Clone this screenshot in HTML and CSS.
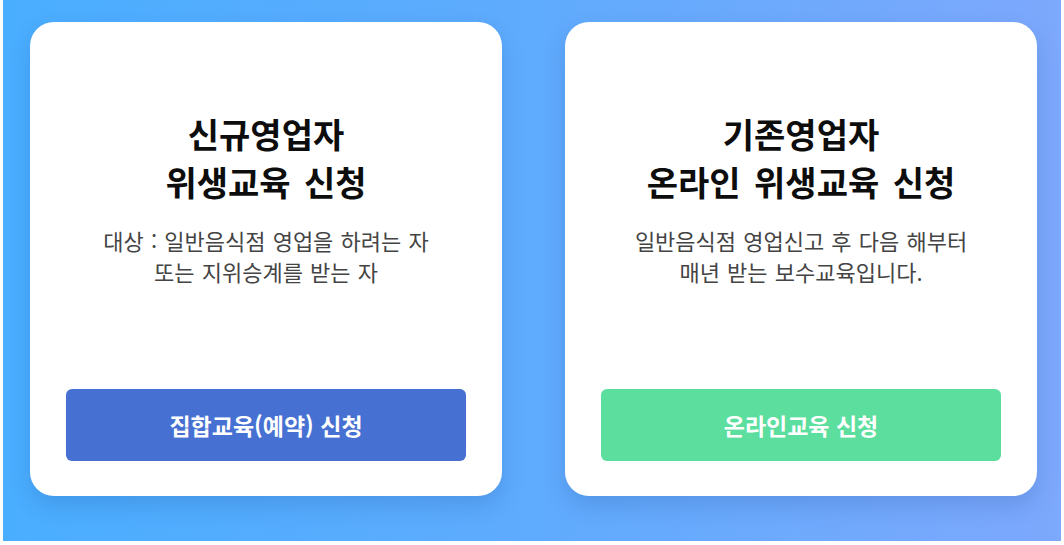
FILE: index.html
```html
<!DOCTYPE html>
<html lang="ko">
<head>
<meta charset="utf-8">
<title>위생교육 신청</title>
<link rel="stylesheet" href="styles.css">
</head>
<body>
<main class="stage">
  <section class="card">
    <h2 class="card-title">신규영업자<br>위생교육 신청</h2>
    <p class="card-desc">대상 : 일반음식점 영업을 하려는 자<br>또는 지위승계를 받는 자</p>
    <a class="card-btn btn-blue" href="#">집합교육(예약) 신청</a>
  </section>
  <section class="card">
    <h2 class="card-title">기존영업자<br>온라인 위생교육 신청</h2>
    <p class="card-desc">일반음식점 영업신고 후 다음 해부터<br>매년 받는 보수교육입니다.</p>
    <a class="card-btn btn-green" href="#">온라인교육 신청</a>
  </section>
</main>
</body>
</html>
```

FILE: styles.css
```css
html, body {
  margin: 0;
  padding: 0;
  background: #ffffff;
}
body {
  font-family: "Noto Sans CJK KR", "Noto Sans", sans-serif;
}
.stage {
  margin: 0 3px;
  height: 541px;
  box-sizing: border-box;
  padding: 22px 0 0 27px;
  display: flex;
  gap: 63px;
  align-items: flex-start;
  background: linear-gradient(90deg, #4aaeff 0%, #5fabfd 50%, #7da8fc 100%);
}
.card {
  width: 472px;
  height: 474px;
  box-sizing: border-box;
  padding: 88px 36px 35px;
  background: #ffffff;
  border-radius: 24px;
  box-shadow: 0 10px 22px rgba(20, 60, 140, 0.18);
  display: flex;
  flex-direction: column;
  align-items: stretch;
  text-align: center;
}
.card-title {
  margin: 0;
  font-size: 34px;
  line-height: 48px;
  font-weight: 700;
  color: #0d0d0d;
  word-spacing: 4px;
}
.card-desc {
  margin: 19px 0 0;
  font-size: 22px;
  line-height: 31px;
  color: #444444;
  word-spacing: 1px;
}
.card-btn {
  margin-top: auto;
  height: 72px;
  border-radius: 6px;
  display: flex;
  align-items: center;
  justify-content: center;
  font-size: 23px;
  font-weight: 700;
  color: #ffffff;
  text-decoration: none;
}
.btn-blue {
  background: #4671d3;
}
.btn-green {
  background: #5bde9e;
}
```
